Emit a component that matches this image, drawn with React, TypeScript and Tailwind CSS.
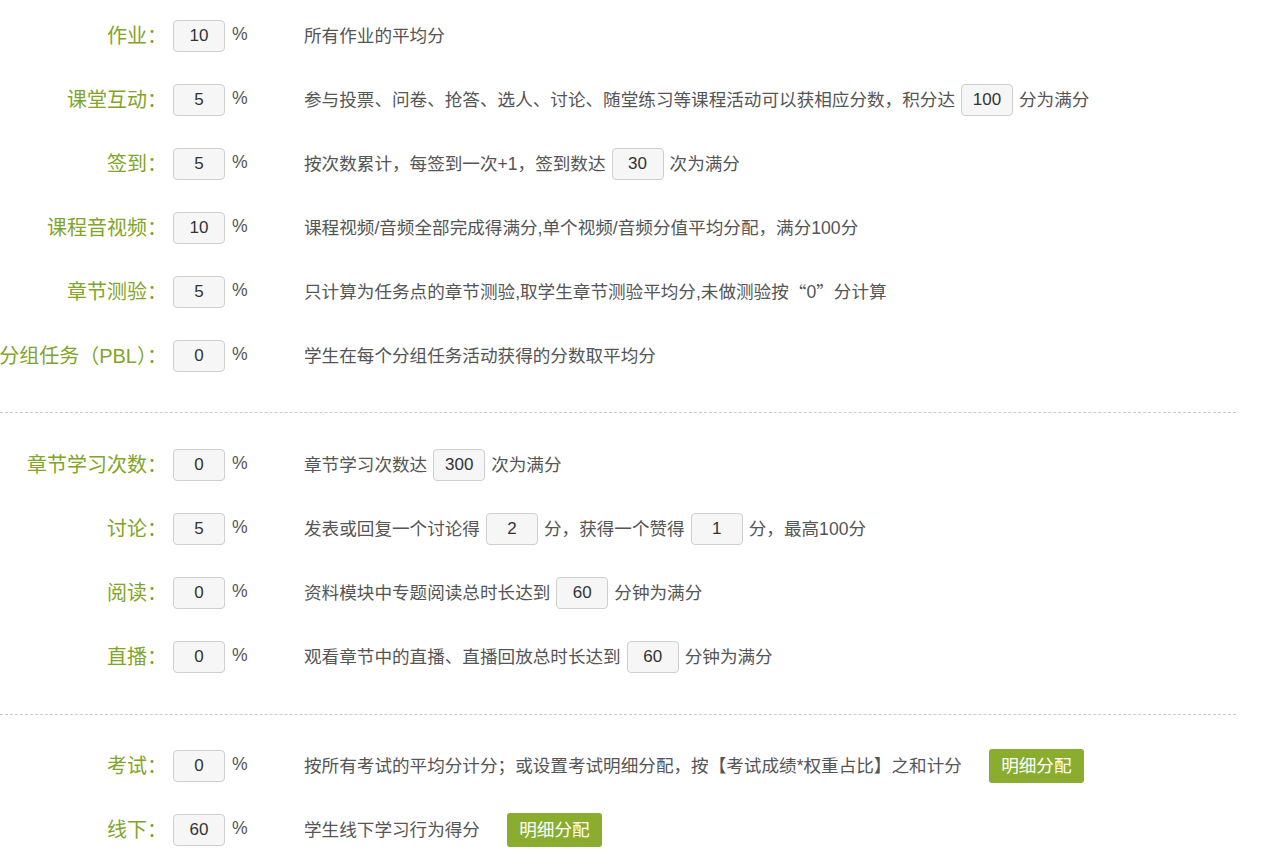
import React from "react";

type Part = string | { box: string } | { btn: string } | { cjk: string };

type Row = {
  label: string;
  value: string;
  desc: Part[];
};

const sections: Row[][] = [
  [
    { label: "作业：", value: "10", desc: ["所有作业的平均分"] },
    {
      label: "课堂互动：",
      value: "5",
      desc: ["参与投票、问卷、抢答、选人、讨论、随堂练习等课程活动可以获相应分数，积分达", { box: "100" }, "分为满分"],
    },
    { label: "签到：", value: "5", desc: ["按次数累计，每签到一次+1，签到数达", { box: "30" }, "次为满分"] },
    { label: "课程音视频：", value: "10", desc: ["课程视频/音频全部完成得满分,单个视频/音频分值平均分配，满分100分"] },
    {
      label: "章节测验：",
      value: "5",
      desc: ["只计算为任务点的章节测验,取学生章节测验平均分,未做测验按", { cjk: "“" }, "0", { cjk: "”" }, "分计算"],
    },
    { label: "分组任务（PBL）：", value: "0", desc: ["学生在每个分组任务活动获得的分数取平均分"] },
  ],
  [
    { label: "章节学习次数：", value: "0", desc: ["章节学习次数达", { box: "300" }, "次为满分"] },
    {
      label: "讨论：",
      value: "5",
      desc: ["发表或回复一个讨论得", { box: "2" }, "分，获得一个赞得", { box: "1" }, "分，最高100分"],
    },
    { label: "阅读：", value: "0", desc: ["资料模块中专题阅读总时长达到", { box: "60" }, "分钟为满分"] },
    { label: "直播：", value: "0", desc: ["观看章节中的直播、直播回放总时长达到", { box: "60" }, "分钟为满分"] },
  ],
  [
    {
      label: "考试：",
      value: "0",
      desc: ["按所有考试的平均分计分；或设置考试明细分配，按【考试成绩*权重占比】之和计分", { btn: "明细分配" }],
    },
    { label: "线下：", value: "60", desc: ["学生线下学习行为得分", { btn: "明细分配" }] },
  ],
];

function NumBox({ value, className = "" }: { value: string; className?: string }) {
  return (
    <input
      readOnly
      defaultValue={value}
      className={
        "h-[32px] w-[52px] shrink-0 rounded-[4px] border border-[#cfcfcf] bg-[#f6f6f6] text-center text-[17px] text-[#333] outline-none " +
        className
      }
    />
  );
}

function RowItem({ row }: { row: Row }) {
  return (
    <div className="flex h-[32px] items-center">
      {/* label, right aligned, long ones spill off to the left */}
      <div className="flex w-[167px] shrink-0 justify-end whitespace-nowrap text-[20px] text-[#82a428]">{row.label}</div>
      <NumBox value={row.value} className="ml-[6px]" />
      <span className="ml-[7px] w-[72px] shrink-0 -translate-y-[2px] text-[#555]">%</span>
      <div className="flex items-center whitespace-nowrap text-[#555]">
        {row.desc.map((p, i) => {
          if (typeof p === "string") return <span key={i}>{p}</span>;
          if ("cjk" in p)
            return (
              <span key={i} className="font-['Noto_Sans_CJK_SC',sans-serif]">
                {p.cjk}
              </span>
            );
          if ("box" in p) return <NumBox key={i} value={p.box} className="mx-[6px]" />;
          return (
            <button
              key={i}
              className="ml-[27px] h-[34px] w-[95px] rounded-[3px] bg-[#8aad2f] text-[17.6px] text-white"
            >
              {p.btn}
            </button>
          );
        })}
      </div>
    </div>
  );
}

export default function App() {
  return (
    <div className="min-h-screen overflow-hidden bg-white pt-[20px] font-['Liberation_Sans','Noto_Sans_CJK_SC',sans-serif] text-[17.6px]">
      <div className="flex flex-col gap-[32px]">
        {sections[0].map((r) => (
          <RowItem key={r.label} row={r} />
        ))}
      </div>
      <div className="mt-[40px] w-[1236px] border-t border-dashed border-[#cccccc]" />
      <div className="mt-[36px] flex flex-col gap-[32px]">
        {sections[1].map((r) => (
          <RowItem key={r.label} row={r} />
        ))}
      </div>
      <div className="mt-[41px] w-[1236px] border-t border-dashed border-[#cccccc]" />
      <div className="mt-[35px] flex flex-col gap-[32px]">
        {sections[2].map((r) => (
          <RowItem key={r.label} row={r} />
        ))}
      </div>
    </div>
  );
}
